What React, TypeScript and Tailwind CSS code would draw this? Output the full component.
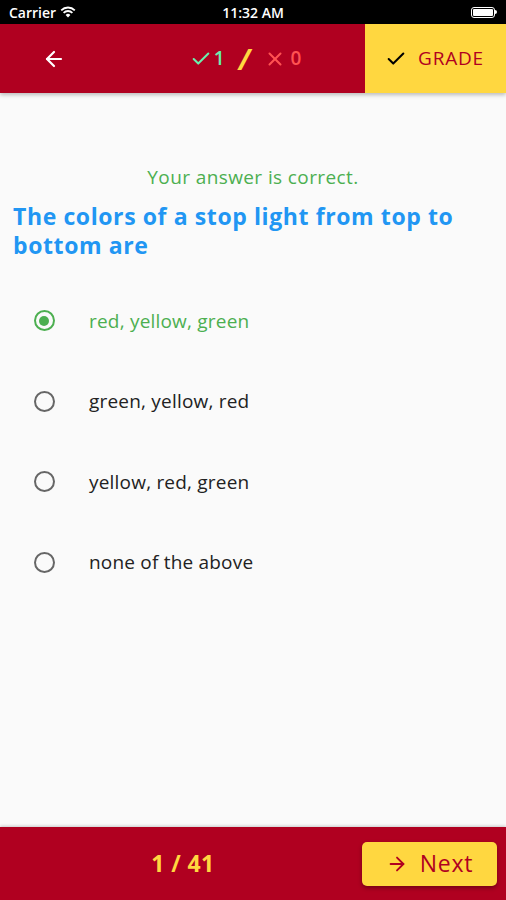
import { ArrowLeft, ArrowRight, Check, X } from 'lucide-react';

const options = ['red, yellow, green', 'green, yellow, red', 'yellow, red, green', 'none of the above'];

function StatusBar() {
  return (
    <div className="h-[24px] bg-black text-white flex items-center justify-between px-[9px] text-[14px] font-semibold relative">
      <div className="flex items-center gap-[4px]">
        <span>Carrier</span>
        <svg width="16" height="12" viewBox="0 0 16 12">
          <path d="M8 11.5 L5.6 8.9 A3.4 3.4 0 0 1 10.4 8.9 Z" fill="white" />
          <path d="M3.6 6.8 A6.3 6.3 0 0 1 12.4 6.8" stroke="white" strokeWidth="1.8" fill="none" />
          <path d="M1.2 4.3 A9.7 9.7 0 0 1 14.8 4.3" stroke="white" strokeWidth="1.8" fill="none" />
        </svg>
      </div>
      <span className="absolute left-1/2 -translate-x-1/2">11:32 AM</span>
      <div className="flex items-center">
        <div className="w-[24px] h-[11px] rounded-[3px] border border-white p-[1px]">
          <div className="w-full h-full bg-white rounded-[1px]" />
        </div>
        <div className="w-[2px] h-[4px] bg-white rounded-r-sm" />
      </div>
    </div>
  );
}

export default function App() {
  return (
    <div className="w-[506px] h-[900px] flex flex-col bg-[#fafafa] font-['Open_Sans',sans-serif] overflow-hidden">
      <StatusBar />
      <header className="h-[69px] bg-[#b00020] flex items-stretch shadow-[0_2px_4px_rgba(0,0,0,0.25)] relative z-10">
        <div className="w-[108px] flex items-center justify-center">
          <ArrowLeft size={24} color="white" strokeWidth={2.2} />
        </div>
        <div className="flex-1 flex items-center justify-center gap-[6px] text-[19px] font-semibold pl-[18px]">
          <div className="flex items-center gap-[2px] text-[#69f0ae]">
            <Check size={22} strokeWidth={2.2} />
            <span>1</span>
          </div>
          <span className="text-[#ffd740] text-[28px] italic font-bold mx-[8px] leading-none">/</span>
          <div className="flex items-center gap-[4px] text-[#ff5252]">
            <X size={22} strokeWidth={2.2} />
            <span>0</span>
          </div>
        </div>
        <div className="w-[141px] bg-[#ffd740] flex items-center justify-center gap-[11px] pr-[2px]">
          <Check size={22} color="#000" strokeWidth={2.2} />
          <span className="text-[#b00020] text-[19px] tracking-[0.8px]">GRADE</span>
        </div>
      </header>

      <main className="flex-1 flex flex-col">
        <p className="text-center text-[#4caf50] text-[19px] mt-[70px] tracking-[0.4px]">Your answer is correct.</p>
        <h1 className="text-[#2196f3] text-[23px] font-bold leading-[29.5px] px-[13px] mt-[10px] tracking-[0.6px]">
          The colors of a stop light from top to bottom are
        </h1>
        <div className="flex flex-col mt-[20px]">
          {options.map((o, i) => (
            <div key={o} className="h-[80.5px] flex items-center">
              <div className="w-[89px] flex justify-center pr-[1px]">
                {i === 0 ? (
                  <div className="w-[21px] h-[21px] rounded-full border-2 border-[#4caf50] flex items-center justify-center">
                    <div className="w-[10px] h-[10px] rounded-full bg-[#4caf50]" />
                  </div>
                ) : (
                  <div className="w-[21px] h-[21px] rounded-full border-2 border-[#666]" />
                )}
              </div>
              <span className={`text-[19px] tracking-[0.2px] ${i === 0 ? 'text-[#4caf50]' : 'text-[#222]'}`}>{o}</span>
            </div>
          ))}
        </div>
      </main>

      <footer className="h-[73px] bg-[#b00020] flex items-center shadow-[0_-1px_3px_rgba(0,0,0,0.2)]">
        <div className="flex-1 flex justify-center pl-[4px]">
          <span className="text-[#ffd740] text-[23px] font-bold tracking-[0.4px]">1 / 41</span>
        </div>
        <button className="mr-[9px] w-[135px] h-[44px] bg-[#ffd740] rounded-[5px] flex items-center justify-center gap-[12px] shadow-[0_2px_4px_rgba(0,0,0,0.35)]">
          <ArrowRight size={22} color="#b00020" strokeWidth={2} />
          <span className="text-[#b00020] text-[23px] tracking-[0.8px]">Next</span>
        </button>
      </footer>
    </div>
  );
}
